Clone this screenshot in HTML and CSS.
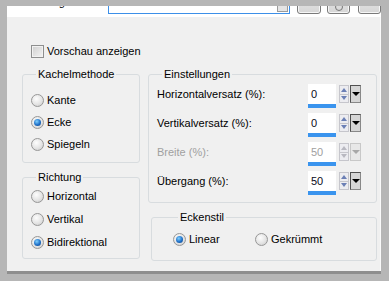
FILE: index.html
```html
<!DOCTYPE html>
<html lang="de">
<head>
<meta charset="utf-8">
<link rel="stylesheet" href="styles.css">
</head>
<body>
<div class="window">
  <div class="panel">
    <div class="topbar">
      <span class="cut-label">Einstellung:</span>
      <div class="combo"><span class="combo-btn"></span></div>
      <span class="tbtn w24"></span>
      <span class="tbtn w23 gap6"><span class="ring"></span></span>
      <span class="tbtn w23 gap8"></span>
    </div>
    <div class="check-row"><span class="checkbox"></span><span>Vorschau anzeigen</span></div>
    <div class="columns">
      <div class="col-left">
        <fieldset class="group kachel">
          <legend>Kachelmethode</legend>
          <div class="radio-row"><span class="radio"></span>Kante</div>
          <div class="radio-row"><span class="radio on"></span>Ecke</div>
          <div class="radio-row"><span class="radio"></span>Spiegeln</div>
        </fieldset>
        <fieldset class="group richtung">
          <legend>Richtung</legend>
          <div class="radio-row"><span class="radio"></span>Horizontal</div>
          <div class="radio-row"><span class="radio"></span>Vertikal</div>
          <div class="radio-row"><span class="radio on"></span>Bidirektional</div>
        </fieldset>
      </div>
      <div class="col-right">
        <fieldset class="group einst">
          <legend>Einstellungen</legend>
          <div class="field-row">
            <span class="field-label">Horizontalversatz (%):</span>
            <div class="spin"><span class="spin-input">0</span><span class="arrows"><span class="up"></span><span class="down"></span></span><span class="drop"></span></div>
          </div>
          <div class="field-row">
            <span class="field-label">Vertikalversatz (%):</span>
            <div class="spin"><span class="spin-input">0</span><span class="arrows"><span class="up"></span><span class="down"></span></span><span class="drop"></span></div>
          </div>
          <div class="field-row disabled">
            <span class="field-label">Breite (%):</span>
            <div class="spin"><span class="spin-input">50</span><span class="arrows"><span class="up"></span><span class="down"></span></span><span class="drop"></span></div>
          </div>
          <div class="field-row">
            <span class="field-label">Übergang (%):</span>
            <div class="spin"><span class="spin-input">50</span><span class="arrows"><span class="up"></span><span class="down"></span></span><span class="drop"></span></div>
          </div>
        </fieldset>
        <fieldset class="group ecken">
          <legend>Eckenstil</legend>
          <div class="inline-radios">
            <div class="radio-row item-linear"><span class="radio on"></span>Linear</div>
            <div class="radio-row"><span class="radio"></span>Gekrümmt</div>
          </div>
        </fieldset>
      </div>
    </div>
  </div>
  <div class="edge"></div>
</div>
</body>
</html>
```
FILE: styles.css
```css
* { box-sizing: border-box; }
html, body { margin: 0; padding: 0; }
body {
  width: 389px;
  height: 281px;
  overflow: hidden;
  font-family: "Liberation Sans", Arial, sans-serif;
  font-size: 11px;
  line-height: 13px;
  color: #000;
}
.window {
  width: 389px;
  height: 281px;
  background: #b6b6b6;
  padding: 6px 8px 0 7px;
  display: flex;
  flex-direction: column;
}
.panel {
  height: 265px;
  background: #f0f0f0;
  box-shadow: inset -1px 0 0 #fafafa;
  display: flex;
  flex-direction: column;
}
.edge {
  height: 3px;
  background: #8e8e8e;
}
.topbar {
  height: 11px;
  background: #fff;
  display: flex;
  align-items: flex-end;
  padding-bottom: 3px;
  overflow: hidden;
}
.cut-label {
  align-self: flex-start;
  margin-top: -10px;
  width: 101px;
  padding-left: 4px;
  white-space: nowrap;
  flex: none;
}
.combo {
  width: 182px;
  height: 20px;
  border: 1px solid #3c8fe8;
  display: flex;
  justify-content: flex-end;
  align-items: flex-end;
  padding: 0 1px 1px 0;
  flex: none;
}
.combo-btn {
  width: 11px;
  height: 14px;
  background: #e4e4e4;
  border: 1px solid #9a9a9a;
}
.tbtn {
  flex: none;
  height: 20px;
  border: 1px solid #7a7a7a;
  border-radius: 0 0 3px 3px;
  background: linear-gradient(#e6e6e6, #d6d6d6);
  box-shadow: inset 0 -1px 0 #f6f6f6, inset 1px 0 0 #f6f6f6, inset -1px 0 0 #f6f6f6;
  margin-left: 7px;
  display: flex;
  justify-content: center;
  align-items: flex-end;
}
.w24 { width: 24px; }
.w23 { width: 23px; }
.gap6 { margin-left: 6px; }
.gap8 { margin-left: 8px; }
.ring {
  width: 8px;
  height: 8px;
  border: 1px solid #777;
  border-radius: 50%;
  margin-bottom: 2px;
}
.check-row {
  margin-top: 28px;
  padding-left: 24px;
  height: 13px;
  display: flex;
  align-items: center;
  gap: 3px;
}
.checkbox {
  width: 13px;
  height: 13px;
  border: 1px solid #8e8f8f;
  background: linear-gradient(135deg, #cfcfcf, #f4f4f4);
  box-shadow: inset 0 0 0 1px #f2f2f2;
}
.columns {
  margin-top: 10px;
  padding-left: 15px;
  display: flex;
  gap: 8px;
}
.col-left { width: 118px; display: flex; flex-direction: column; }
.col-right { width: 229px; display: flex; flex-direction: column; }
.group {
  margin: 0;
  min-inline-size: 0;
  border: 1px solid #d8dcdf;
  border-radius: 3px;
}
.group legend {
  padding: 0 2px;
  margin-left: 5px;
  line-height: 13px;
}
.radio-row {
  display: flex;
  align-items: center;
  gap: 3px;
  height: 22px;
  white-space: nowrap;
}
.radio {
  width: 13px;
  height: 13px;
  border-radius: 50%;
  border: 1px solid #979797;
  background: radial-gradient(circle at 40% 35%, #fdfdfd, #e4e4e4 55%, #c8c8c8);
  display: flex;
  align-items: center;
  justify-content: center;
  flex: none;
}
.radio.on::after {
  content: "";
  width: 7px;
  height: 7px;
  border-radius: 50%;
  background: radial-gradient(circle at 40% 35%, #7fd0ff, #1f70c8 55%, #0c3c7c);
}
.kachel { padding: 8px 4px 7px 8px; }
.richtung { margin-top: 8px; padding: 1px 4px 4px 8px; }
.richtung .radio-row { height: 23px; }
.einst { padding: 3px 15px 7px 8px; display: flex; flex-direction: column; gap: 5px; }
.field-row {
  display: flex;
  justify-content: space-between;
  align-items: center;
  height: 24px;
}
.field-label { margin-top: -3px; white-space: nowrap; }
.spin {
  display: flex;
  align-items: flex-start;
  height: 24px;
}
.spin-input {
  width: 28px;
  height: 24px;
  background: #fff;
  border-bottom: 4px solid #3a94ee;
  padding: 4px 0 0 3px;
  color: #0a0a20;
}
.arrows {
  margin-left: 3px;
  width: 10px;
  height: 18px;
  margin-top: 1px;
  display: flex;
  flex-direction: column;
  border: 1px solid #c6c6cc;
  background: #ececf0;
}
.arrows span {
  flex: 1;
  display: flex;
  align-items: center;
  justify-content: center;
}
.arrows .up { border-bottom: 1px solid #c6c6cc; }
.arrows .up::after {
  content: "";
  border-left: 3px solid transparent;
  border-right: 3px solid transparent;
  border-bottom: 4px solid #6b7fb5;
}
.arrows .down::after {
  content: "";
  border-left: 3px solid transparent;
  border-right: 3px solid transparent;
  border-top: 4px solid #6b7fb5;
}
.drop {
  margin-left: 1px;
  margin-top: 1px;
  width: 11px;
  height: 18px;
  background: #d6d6d6;
  border: 1px solid #505050;
  border-right-color: #888;
  border-bottom-color: #888;
  display: flex;
  align-items: center;
  justify-content: center;
}
.drop::after {
  content: "";
  border-left: 4px solid transparent;
  border-right: 4px solid transparent;
  border-top: 4px solid #000;
}
.disabled .field-label, .disabled .spin-input { color: #a0a0a0; }
.disabled .arrows .up::after { border-bottom-color: #b8b8c0; }
.disabled .arrows .down::after { border-top-color: #b8b8c0; }
.disabled .drop { background: #e8e8e8; border-color: #c8c8c8; }
.disabled .drop::after { border-top-color: #a8a8a8; }
.ecken { margin-top: 8px; margin-left: 3px; padding: 7px 4px 13px 21px; }
.inline-radios { display: flex; }
.inline-radios .radio-row { height: 16px; }
.item-linear { width: 82px; }
```
